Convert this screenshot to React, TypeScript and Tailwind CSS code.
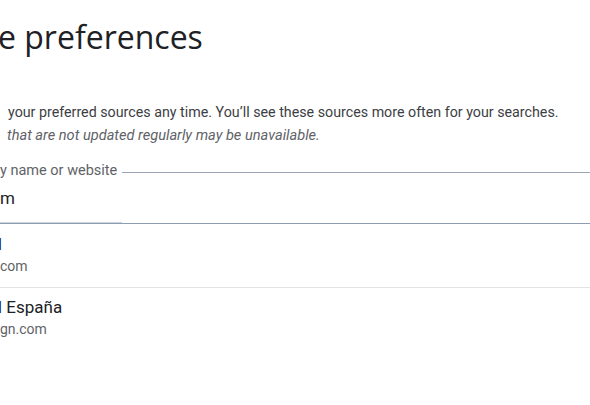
export default function App() {
  return (
    <div className="h-[405px] w-[590px] overflow-hidden bg-white font-['Roboto',sans-serif] text-[#202124]">
      <h1 className="-ml-[2px] pt-[17px] font-['Open_Sans',sans-serif] text-[32px] leading-[40px] font-normal whitespace-nowrap">
        e preferences
      </h1>
      <p className="mt-[45px] pl-[8px] text-[14.25px] leading-5 text-[#3c4043] whitespace-nowrap">
        your preferred sources any time. You’ll see these sources more often for your searches.
      </p>
      <p className="mt-[3px] pl-[7px] text-[14.6px] leading-5 italic text-[#5f6368] whitespace-nowrap">
        that are not updated regularly may be unavailable.
      </p>

      <div className="mt-[16px]">
        <div className="flex h-[20px] items-center">
          <span className="text-[14.5px] leading-5 text-[#5f6368] whitespace-nowrap">y name or website</span>
          <div className="ml-[5px] mt-[2px] h-px flex-1 bg-[#9aa7b8]" />
        </div>
        <div className="h-[41px] pt-[5px]">
          <span className="text-[17px] leading-6 text-[#202124]">m</span>
        </div>
        <div className="h-px w-[122px] bg-[#c9d2dd]" />
        <div className="h-px bg-[#8e9db1]" />
      </div>

      <ul>
        <li className="pt-[8px] pb-[11px]">
          <div className="-ml-[10px] text-[17px] leading-6 text-[#202124]">N</div>
          <div className="text-[14px] leading-5 text-[#5f6368]">com</div>
        </li>
        <li className="border-t border-[#e3e3e3] pt-[7px]">
          <div className="-ml-[10px] text-[17px] leading-6 text-[#202124] whitespace-nowrap">N España</div>
          <div className="text-[14px] leading-5 text-[#5f6368]">gn.com</div>
        </li>
      </ul>
    </div>
  );
}
